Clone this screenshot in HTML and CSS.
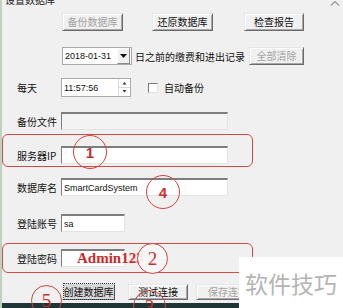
FILE: index.html
```html
<!DOCTYPE html>
<html lang="zh-CN">
<head>
    <meta charset="UTF-8">
    <meta name="viewport" content="width=device-width, initial-scale=1.0">
    <title>设置数据库</title>
    <link rel="stylesheet" href="styles.css">
</head>
<body>
    <div class="window">
        <div class="title"><span>设置数据库</span></div>
        <svg class="caret" width="10" height="6" viewBox="0 0 10 6"><polyline points="1,5.5 5,1.5 9,5.5" fill="none" stroke="#555" stroke-width="1"/></svg>

        <div class="toolbar">
            <button class="btn off b-backup">备份数据库</button>
            <button class="btn b-restore">还原数据库</button>
            <button class="btn b-report">检查报告</button>
        </div>

        <div class="row r-date">
            <div class="combo">
                <span class="val">2018-01-31</span>
                <i class="drop"><svg width="7" height="4" viewBox="0 0 7 4"><polygon points="0,0 7,0 3.5,4" fill="#111"/></svg></i>
            </div>
            <span class="note">日之前的缴费和进出记录</span>
            <button class="btn off b-clear">全部清除</button>
        </div>

        <div class="row r-time">
            <span class="lbl">每天</span>
            <div class="field time">
                <span class="val">11:57:56</span>
                <i class="spin">
                    <svg width="12" height="17" viewBox="0 0 12 17">
                        <line x1="0.5" y1="0" x2="0.5" y2="17" stroke="#d8d8d8"/>
                        <line x1="1" y1="8.5" x2="12" y2="8.5" stroke="#d8d8d8"/>
                        <polygon points="4.5,5.5 8.5,5.5 6.5,3" fill="#333"/>
                        <polygon points="4.5,11 8.5,11 6.5,13.5" fill="#333"/>
                    </svg>
                </i>
            </div>
            <span class="check"><i class="box"></i>自动备份</span>
        </div>

        <div class="row r-file">
            <span class="lbl">备份文件</span>
            <div class="field wide off"></div>
        </div>

        <div class="group g-ip">
            <div class="row">
                <span class="lbl">服务器IP</span>
                <div class="field wide"></div>
            </div>
        </div>

        <div class="row r-db">
            <span class="lbl">数据库名</span>
            <div class="field wide"><span class="val">SmartCardSystem</span></div>
        </div>

        <div class="row r-user">
            <span class="lbl">登陆账号</span>
            <div class="field short"><span class="val">sa</span></div>
        </div>

        <div class="group g-pwd">
            <div class="row">
                <span class="lbl">登陆密码</span>
                <div class="field short pwd"><span class="typed">Admin123</span></div>
            </div>
        </div>

        <div class="actions">
            <button class="btn b-create"><span class="focus">创建数据库</span></button>
            <button class="btn b-test">测试连接</button>
            <button class="btn off b-save">保存连接</button>
        </div>

        <div class="taskbar"></div>

        <!-- numbered marks drawn over the form -->
        <span class="mark m1">1</span>
        <span class="mark m4">4</span>
        <span class="mark m2 filled">2</span>
        <span class="mark m5">5</span>
        <span class="mark m3">3</span>

        <div class="watermark">软件技巧</div>
    </div>
</body>
</html>
```

FILE: styles.css
```css
body {
    margin: 0;
    background-color: #f0f0f0;
    font-family: "Noto Sans CJK SC", "Liberation Sans", sans-serif;
    font-size: 10px;
    color: #111;
}
.window {
    position: relative;
    width: 341px;
    height: 308px;
    overflow: hidden;
    border-left: 2px solid #bfd2bf;
    background-color: #f0f0f0;
}
.title {
    height: 7px;
    overflow: hidden;
    padding-left: 3px;
}
.title span {
    display: block;
    margin-top: -7px;
    line-height: 13px;
    font-size: 10px;
    color: #222;
}
.caret {
    position: absolute;
    top: 0;
    right: 3px;
}

/* buttons */
.btn {
    height: 18px;
    padding: 0;
    margin: 0;
    font-family: "Noto Sans CJK SC", sans-serif;
    font-size: 10px;
    line-height: 14px;
    color: #111;
    background-color: #f0f0f0;
    border: 1px solid;
    border-color: #e6e6e6 #6a6a6a #6a6a6a #e6e6e6;
    box-shadow: inset 1px 1px #ffffff, inset -1px -1px #a8a8a8;
}
.btn.off { color: #a3a3a3; }

.toolbar {
    display: flex;
    margin-top: 6px;
    padding-left: 60px;
}
.b-backup { width: 61px; margin-right: 29px; }
.b-restore { width: 61px; margin-right: 31px; }
.b-report { width: 60px; }

/* rows */
.row {
    display: flex;
    align-items: center;
    height: 18px;
}
.lbl {
    width: 44px;
    margin-left: 15px;
    white-space: nowrap;
}
.group .lbl { margin-left: 14px; }

.r-date {
    margin-top: 16px;
    padding-left: 60px;
    padding-right: 39px;
}
.combo {
    display: flex;
    align-items: center;
    width: 68px;
    height: 16px;
    background-color: #fff;
    border: 1px solid #a9a9a9;
}
.val {
    flex: 1;
    padding-left: 2px;
    font-family: "Liberation Sans", sans-serif;
    font-size: 9px;
    white-space: nowrap;
}
.drop {
    display: flex;
    align-items: center;
    justify-content: center;
    width: 11px;
    height: 14px;
    margin-right: 1px;
    background-color: #f0f0f0;
    border: 1px solid;
    border-color: #fff #8a8a8a #8a8a8a #fff;
}
.note { margin-left: 3px; white-space: nowrap; }
.b-clear { width: 55px; margin-left: auto; }

.r-time {
    margin-top: 13px;
    height: 19px;
}
.field {
    display: flex;
    align-items: center;
    box-sizing: border-box;
    height: 100%;
    background-color: #fff;
    border: 1px solid;
    border-color: #7d7d7d #e3e3e3 #e3e3e3 #7d7d7d;
    border-top-width: 2px;
}
.field.off { background-color: #f3f3f3; }
.time { width: 70px; border-color: #a9a9a9; border-top-width: 1px; }
.spin { display: flex; height: 17px; }
.wide { width: 167px; }
.short { width: 64px; }

.check {
    display: flex;
    align-items: center;
    margin-left: 17px;
    white-space: nowrap;
}
.box {
    width: 8px;
    height: 8px;
    margin-right: 6px;
    background-color: #fff;
    border: 1px solid;
    border-color: #777 #e3e3e3 #e3e3e3 #777;
}

.r-file { margin-top: 15px; }

.group {
    width: 249px;
    border: 1px solid #d44b44;
    border-radius: 6px;
}
.g-ip {
    margin-top: 4px;
    padding: 11px 0 2px;
}
.r-db { margin-top: 11px; }
.r-user { margin-top: 18px; }
.g-pwd {
    margin-top: 11px;
    padding: 5px 0;
}
.pwd { overflow: visible; }
.typed {
    padding-left: 15px;
    font-family: "Liberation Serif", serif;
    font-weight: bold;
    font-size: 15px;
    color: #d12a2a;
    white-space: nowrap;
}

.actions {
    display: flex;
    margin-top: 11px;
    padding-left: 60px;
}
.actions .btn { height: 16px; line-height: 12px; }
.b-create { width: 53px; margin-right: 13px; }
.b-test { width: 60px; margin-right: 8px; }
.b-save { width: 64px; }
.focus {
    background-color: #d6d6d6;
    outline: 1px dotted #333;
}

.taskbar {
    margin-top: 3px;
    height: 5px;
    background-color: #1f3536;
}

/* numbered marks */
.mark {
    position: absolute;
    box-sizing: border-box;
    display: flex;
    align-items: center;
    justify-content: center;
    width: 34px;
    height: 34px;
    border: 1.5px solid #d0443f;
    border-radius: 50%;
    font-family: "Liberation Sans", sans-serif;
    font-weight: bold;
    font-size: 15px;
    color: #b8322c;
}
.mark.filled { background-color: rgba(246, 246, 246, 0.95); }
.m1 { left: 71px; top: 135px; }
.m4 { left: 144px; top: 175px; color: #cc2e28; }
.m2 {
    left: 135px;
    top: 243px;
    width: 31px;
    height: 31px;
    font-family: "Liberation Serif", serif;
    font-weight: normal;
    font-size: 19px;
    color: #c6322c;
}
.m5 {
    left: 29px;
    top: 285px;
    width: 31px;
    height: 31px;
    font-family: "Liberation Serif", serif;
    font-weight: normal;
    font-size: 19px;
    color: #c6322c;
}
.m3 {
    left: 131px;
    top: 290px;
    width: 33px;
    height: 33px;
    font-family: "Liberation Serif", serif;
    font-weight: normal;
    font-size: 19px;
    color: #c6322c;
}

.watermark {
    position: absolute;
    right: 0;
    bottom: 0;
    width: 104px;
    height: 51px;
    display: flex;
    align-items: center;
    justify-content: center;
    background-color: #fff;
    font-size: 23px;
    color: #b4b4b4;
    white-space: nowrap;
}
```
